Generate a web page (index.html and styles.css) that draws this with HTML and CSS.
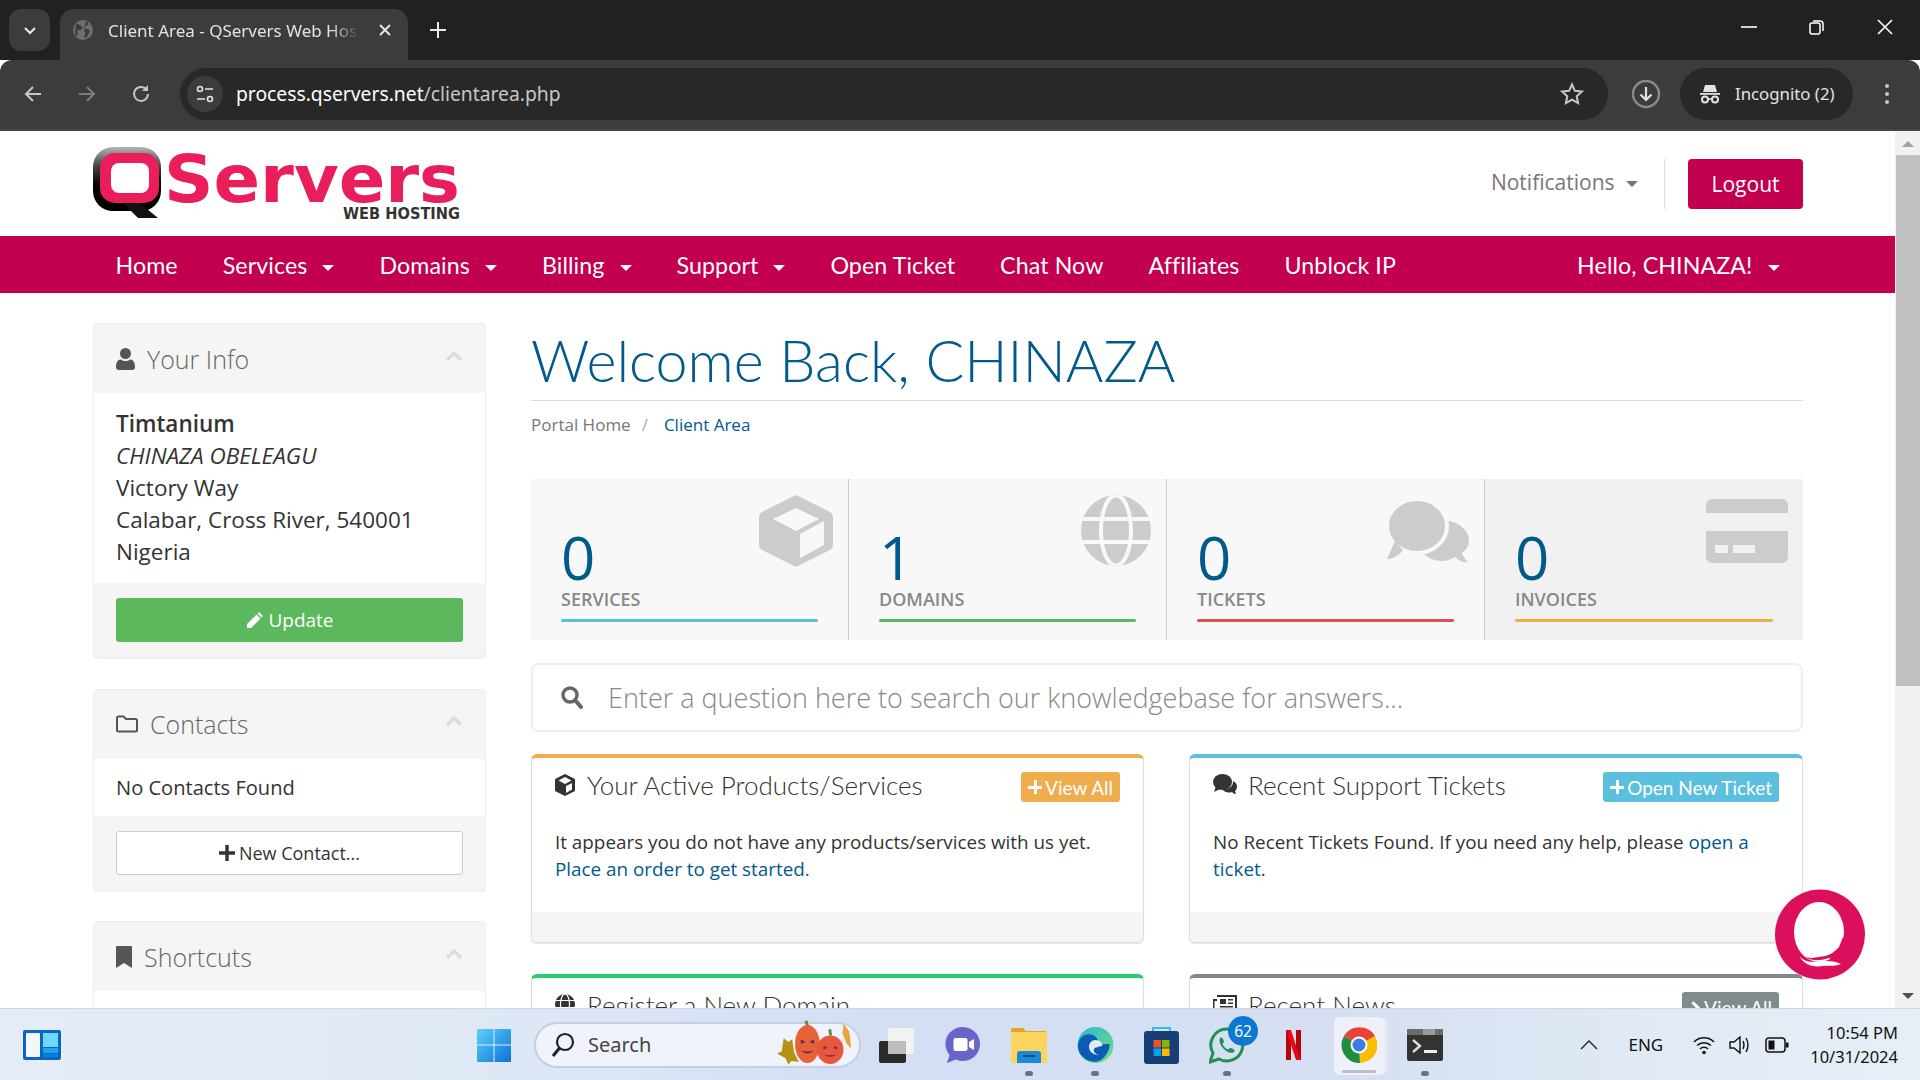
FILE: index.html
```html
<!DOCTYPE html>
<html lang="en">
<head>
  <meta charset="UTF-8">
  <title>Client Area - QServers Web Hosting</title>
  <link rel="stylesheet" href="styles.css">
</head>
<body>
  <!-- browser chrome -->
  <div class="tabstrip">
    <div class="tab-search">
      <svg width="14" height="14" viewBox="0 0 14 14"><path d="M2 5l5 5 5-5" fill="none" stroke="#e8eaed" stroke-width="2"/></svg>
    </div>
    <div class="tab">
      <svg class="tab-fav" width="20" height="20" viewBox="0 0 20 20"><circle cx="10" cy="10" r="10" fill="#6b6e72"/><path d="M3 4c3 0 5 1 6 3s-1 3-3 3-2 2-1 5l-3 1zM13 1c2 1 3 3 2 4s-3 0-4 1 1 3 3 3 3 1 2 4-3 5-5 5c1-3 2-5 0-7" fill="#3c3c3c"/></svg>
      <span class="tab-title">Client Area - QServers Web Hos</span>
      <svg class="tab-close" width="14" height="14" viewBox="0 0 14 14"><path d="M2 2l10 10M12 2L2 12" stroke="#e8eaed" stroke-width="1.8"/></svg>
    </div>
    <svg class="new-tab" width="18" height="18" viewBox="0 0 18 18"><path d="M9 1v16M1 9h16" stroke="#e8eaed" stroke-width="2"/></svg>
    <div class="win-controls">
      <svg width="16" height="16" viewBox="0 0 16 16"><path d="M0 8h16" stroke="#fff" stroke-width="1.6"/></svg>
      <svg width="16" height="16" viewBox="0 0 16 16"><rect x="1" y="4" width="10" height="11" rx="2" fill="none" stroke="#fff" stroke-width="1.5"/><path d="M4 2h7a3 3 0 0 1 3 3v7" fill="none" stroke="#fff" stroke-width="1.5"/></svg>
      <svg width="16" height="16" viewBox="0 0 16 16"><path d="M1 1l14 14M15 1L1 15" stroke="#fff" stroke-width="1.6"/></svg>
    </div>
  </div>
  <div class="toolbar">
    <svg class="tool" width="20" height="20" viewBox="0 0 20 20"><path d="M18 10H3M10 3l-7 7 7 7" fill="none" stroke="#c7c7c7" stroke-width="2"/></svg>
    <svg class="tool" width="20" height="20" viewBox="0 0 20 20"><path d="M2 10h15M10 3l7 7-7 7" fill="none" stroke="#7d7d7d" stroke-width="2"/></svg>
    <svg class="tool" width="20" height="20" viewBox="0 0 20 20"><path d="M17 10a7 7 0 1 1-2-5" fill="none" stroke="#c7c7c7" stroke-width="2"/><path d="M17 1v6h-6z" fill="#c7c7c7"/></svg>
    <div class="omnibox">
      <span class="site-info">
        <svg width="20" height="20" viewBox="0 0 20 20"><g fill="none" stroke="#e3e3e3" stroke-width="1.6"><circle cx="5" cy="5" r="2.5"/><path d="M10 5h8M2 15h8"/><circle cx="15" cy="15" r="2.5"/></g></svg>
      </span>
      <span class="url"><b>process.qservers.net</b>/clientarea.php</span>
      <svg class="star" width="24" height="24" viewBox="0 0 24 24"><path d="M12 2.5l2.9 6.3 6.9.8-5.1 4.7 1.4 6.8-6.100-3.400-6.100 3.400 1.400-6.800-5.100-4.700 6.900-.8z" fill="none" stroke="#c7c7c7" stroke-width="2"/></svg>
    </div>
    <svg class="dl" width="30" height="30" viewBox="0 0 30 30"><circle cx="15" cy="15" r="13" fill="none" stroke="#8a8a8a" stroke-width="2.400"/><path d="M15 8v13M9.500 15.500l5.500 5.500 5.500-5.500" fill="none" stroke="#e3e3e3" stroke-width="2.200"/></svg>
    <div class="incognito">
      <svg width="22" height="22" viewBox="0 0 22 22"><path d="M6 2h10l2 7H4zM1 10h20v1.800H1z" fill="#e3e3e3"/><circle cx="6" cy="16.500" r="3" fill="none" stroke="#e3e3e3" stroke-width="2"/><circle cx="16" cy="16.500" r="3" fill="none" stroke="#e3e3e3" stroke-width="2"/><path d="M9 16h4" stroke="#e3e3e3" stroke-width="1.500"/></svg>
      <span>Incognito (2)</span>
    </div>
    <div class="kebab"><i></i><i></i><i></i></div>
  </div>

  <!-- page -->
  <div class="viewport">
    <div class="page">
      <header class="site-head">
        <svg class="logo" width="372" height="90" viewBox="0 -10 372 90" role="img" aria-label="QServers Web Hosting">
          <defs>
            <linearGradient id="qring" x1="0" y1="0" x2="0" y2="1"><stop offset="0" stop-color="#b5b5b5"/><stop offset=".3" stop-color="#444"/><stop offset=".6" stop-color="#000"/><stop offset="1" stop-color="#000"/></linearGradient>
          </defs>
          <rect x="0" y="1" width="68" height="64" rx="20" fill="url(#qring)"/>
          <path d="M31 58h17l17 14H45z" fill="#111"/>
          <rect x="7" y="7" width="59" height="50" rx="15" fill="#e91e5b"/>
          <rect x="18" y="17" width="38" height="30" rx="8" fill="#fff"/>
          <text class="logo-word" x="71" y="56" textLength="296" lengthAdjust="spacingAndGlyphs">Servers</text>
          <text class="logo-sub" x="250" y="73" textLength="117" lengthAdjust="spacingAndGlyphs">WEB HOSTING</text>
        </svg>
        <div class="head-actions">
          <a class="notif">Notifications <i class="caret caret-grey"></i></a>
          <span class="head-sep"></span>
          <a class="btn-logout">Logout</a>
        </div>
      </header>

      <nav class="main-nav">
        <a>Home</a>
        <a>Services <i class="caret"></i></a>
        <a>Domains <i class="caret"></i></a>
        <a>Billing <i class="caret"></i></a>
        <a>Support <i class="caret"></i></a>
        <a>Open Ticket</a>
        <a>Chat Now</a>
        <a>Affiliates</a>
        <a>Unblock IP</a>
        <a class="nav-right">Hello, CHINAZA! <i class="caret"></i></a>
      </nav>

      <div class="content">
        <aside class="sidebar">
          <section class="side-panel">
            <div class="side-head">
              <svg class="side-ico" width="19" height="22" viewBox="0 0 19 22"><circle cx="9.500" cy="5.500" r="5.500" fill="#555"/><path d="M0 19c0-5 2-7.500 5-7.500 1.300 1 3 1.500 4.500 1.500s3.200-.5 4.500-1.500c3 0 5 2.500 5 7.500 0 2-1 3-3 3H3c-2 0-3-1-3-3z" fill="#555"/></svg>
              <h3>Your Info</h3>
              <svg class="side-chev" width="18" height="12" viewBox="0 0 18 12"><path d="M2 10l7-7 7 7" fill="none" stroke="#ddd" stroke-width="3.500"/></svg>
            </div>
            <div class="side-body">
              <strong>Timtanium</strong><br>
              <em>CHINAZA OBELEAGU</em><br>
              Victory Way<br>
              Calabar, Cross River, 540001<br>
              Nigeria
            </div>
            <div class="side-foot">
              <a class="btn-block btn-green">
                <svg width="19" height="19" viewBox="0 0 19 19"><path d="M14 1l4 4-1.500 1.500-4-4zM11.500 3.500l4 4L6 17H2v-4z" fill="#fff"/></svg>
                Update
              </a>
            </div>
          </section>

          <section class="side-panel">
            <div class="side-head">
              <svg class="side-ico" width="22" height="18" viewBox="0 0 22 18"><path d="M1 15V3a1.500 1.500 0 0 1 1.500-1.500h5L10 4h9.500A1.500 1.500 0 0 1 21 5.500V15a1.500 1.500 0 0 1-1.500 1.500h-17A1.500 1.500 0 0 1 1 15z" fill="none" stroke="#555" stroke-width="2"/></svg>
              <h3>Contacts</h3>
              <svg class="side-chev" width="18" height="12" viewBox="0 0 18 12"><path d="M2 10l7-7 7 7" fill="none" stroke="#ddd" stroke-width="3.500"/></svg>
            </div>
            <div class="side-body side-body-short">No Contacts Found</div>
            <div class="side-foot">
              <a class="btn-block btn-white">
                <svg width="16" height="16" viewBox="0 0 16 16"><path d="M8 0v16M0 8h16" stroke="#333" stroke-width="3.400"/></svg>
                New Contact...
              </a>
            </div>
          </section>

          <section class="side-panel">
            <div class="side-head">
              <svg class="side-ico" width="16" height="22" viewBox="0 0 16 22"><path d="M0 1a1 1 0 0 1 1-1h14a1 1 0 0 1 1 1v21l-8-5-8 5z" fill="#555"/></svg>
              <h3>Shortcuts</h3>
              <svg class="side-chev" width="18" height="12" viewBox="0 0 18 12"><path d="M2 10l7-7 7 7" fill="none" stroke="#ddd" stroke-width="3.500"/></svg>
            </div>
            <div class="side-body"></div>
          </section>
        </aside>

        <main class="main-col">
          <h1 class="welcome">Welcome Back, CHINAZA</h1>
          <div class="crumbs"><a>Portal Home</a><span class="crumb-sep">/</span><a class="crumb-on">Client Area</a></div>

          <div class="stats">
            <div class="stat">
              <svg class="stat-ico" width="74" height="72" viewBox="0 0 74 72"><path d="M37 0l34 17q3 2 3 5v28q0 3-3 5L37 72 3 55q-3-2-3-5V22q0-3 3-5z" fill="#ccc"/><path d="M37 13l23 11-23 12-23-12z" fill="#f8f8f8"/><path d="M41 39l24-13v24L41 63z" fill="#f8f8f8"/></svg>
              <div class="stat-num">0</div>
              <div class="stat-label">Services</div>
              <div class="stat-line line-info"></div>
            </div>
            <div class="stat">
              <svg class="stat-ico" width="70" height="71" viewBox="0 0 70 71"><defs><clipPath id="glb"><ellipse cx="35" cy="35.500" rx="35" ry="35.500"/></clipPath></defs><g clip-path="url(#glb)"><rect width="70" height="71" fill="#ccc"/><g fill="none" stroke="#f8f8f8" stroke-width="4"><ellipse cx="35" cy="35.500" rx="15" ry="35"/><path d="M0 24h70M0 47h70"/></g></g></svg>
              <div class="stat-num">1</div>
              <div class="stat-label">Domains</div>
              <div class="stat-line line-ok"></div>
            </div>
            <div class="stat">
              <svg class="stat-ico ico-c" width="82" height="64" viewBox="0 0 82 64"><path d="M62 22c11 2 20 10 20 19 0 6-3 10-7 13 1 4 4 7 6 9-4 1-9-1-13-5-4 2-8 4-13 4-9 0-17-4-21-11" fill="#ccc"/><ellipse cx="30" cy="27" rx="30" ry="27" fill="#ccc" stroke="#f8f8f8" stroke-width="4"/><path d="M8 42l-8 18c5 0 12-3 16-9z" fill="#ccc"/></svg>
              <div class="stat-num">0</div>
              <div class="stat-label">Tickets</div>
              <div class="stat-line line-bad"></div>
            </div>
            <div class="stat stat-last">
              <svg class="stat-ico ico-c" width="82" height="64" viewBox="0 0 82 64"><path d="M0 14V6a6 6 0 0 1 6-6h70a6 6 0 0 1 6 6v8zM0 32h82v26a6 6 0 0 1-6 6H6a6 6 0 0 1-6-6z" fill="#ccc"/><path d="M9 46h13v8H9zM27 46h22v8H27z" fill="#f1f1f1"/></svg>
              <div class="stat-num">0</div>
              <div class="stat-label">Invoices</div>
              <div class="stat-line line-warn"></div>
            </div>
          </div>

          <div class="kb-search">
            <svg width="22" height="23" viewBox="0 0 22 23"><circle cx="9" cy="9" r="7" fill="none" stroke="#666" stroke-width="3.400"/><path d="M14 14l6 7" stroke="#666" stroke-width="4" stroke-linecap="round"/></svg>
            <span>Enter a question here to search our knowledgebase for answers...</span>
          </div>

          <div class="home-panels">
            <section class="home-panel top-warn">
              <div class="hp-head">
                <svg class="hp-ico" width="20" height="22" viewBox="0 0 20 22"><path d="M10 0l9 4.500q1 .5 1 1.500v10q0 1-1 1.500L10 22 1 17.500Q0 17 0 16V6q0-1 1-1.500z" fill="#333"/><path d="M10 3l6.500 3.500L10 10 3.500 6.500zM11 12l6-3v6.500l-6 3.500z" fill="#fff"/></svg>
                <h3>Your Active Products/Services</h3>
                <a class="btn-small bg-warn"><i class="plus"></i>View All</a>
              </div>
              <div class="hp-body">It appears you do not have any products/services with us yet. <a>Place an order to get started.</a></div>
              <div class="hp-foot"></div>
            </section>
            <section class="home-panel top-info">
              <div class="hp-head">
                <svg class="hp-ico ico-wide" width="24" height="20" viewBox="0 0 24 20"><ellipse cx="9.500" cy="8" rx="9.500" ry="8" fill="#333"/><path d="M3 12l-2 6 6-3z" fill="#333"/><path d="M20 7c2.500 1 4 3 4 5.500 0 2-1 3.500-2 4.500l1 3c-2 0-3-1-4-2-1 .5-2 .5-3 .5-3 0-5-1-6.500-3 6 0 11-3 10.500-8.500z" fill="#333"/></svg>
                <h3>Recent Support Tickets</h3>
                <a class="btn-small bg-info"><i class="plus"></i>Open New Ticket</a>
              </div>
              <div class="hp-body">No Recent Tickets Found. If you need any help, please <a>open a ticket</a>.</div>
              <div class="hp-foot"></div>
            </section>
            <section class="home-panel top-green">
              <div class="hp-head">
                <svg class="hp-ico" width="20" height="20" viewBox="0 0 20 20"><circle cx="10" cy="10" r="10" fill="#333"/><g fill="none" stroke="#fff" stroke-width="1.200"><ellipse cx="10" cy="10" rx="4.500" ry="10"/><path d="M0 6.500h20M0 13.500h20"/></g></svg>
                <h3>Register a New Domain</h3>
              </div>
            </section>
            <section class="home-panel top-grey">
              <div class="hp-head">
                <svg class="hp-ico ico-wide" width="24" height="20" viewBox="0 0 24 20"><path d="M4 2h19v16H2a1.500 1.500 0 0 1-1.500-1.500V6H4" fill="none" stroke="#333" stroke-width="2"/><path d="M7 5h6v5H7zM15 5h5v1.500h-5zM15 8.500h5V10h-5zM7 12h13v1.500H7z" fill="#333"/></svg>
                <h3>Recent News</h3>
                <a class="btn-small bg-grey"><i class="chev-r"></i>View All</a>
              </div>
            </section>
          </div>
        </main>
      </div>
    </div>
    <div class="scrollbar">
      <i class="sb-up"></i>
      <div class="sb-track"><div class="sb-thumb"></div></div>
      <i class="sb-down"></i>
    </div>

    <svg class="chat-bubble" width="90" height="91" viewBox="0 0 90 91">
      <circle cx="45" cy="45.500" r="45" fill="#dc0f5c"/>
      <ellipse cx="44" cy="43" rx="25" ry="30" fill="#fff"/>
      <path d="M22 62c8 9 16 7 22 6 7-1 13-2 20-10l4-10 6 3-4 22c-8-1-12-3-16-4-8 2-18 6-32-7z" fill="#dc0f5c"/>
      <path d="M24 67c10 10 20 4 28 5 5 0 10 1 14 3-8 3-12 1-18 2-8 1-17 1-24-10z" fill="#fff"/>
    </svg>
  </div>

  <!-- windows taskbar -->
  <footer class="taskbar">
    <svg class="tb-widget" width="38" height="30" viewBox="0 0 38 30"><rect width="38" height="30" rx="2" fill="#0a66c2"/><rect x="3" y="3" width="14" height="24" rx="1" fill="#f4f6f8"/><rect x="20" y="3" width="15" height="14" fill="#6fd8ff"/><rect x="20" y="18" width="15" height="5" fill="#19a6f5"/><rect x="20" y="24" width="15" height="3" fill="#0d7fd6"/></svg>
    <div class="tb-center">
      <svg class="tb-win" width="34" height="34" viewBox="0 0 34 34"><defs><linearGradient id="wing" x1="0" y1="0" x2="1" y2="1"><stop offset="0" stop-color="#5ed0fa"/><stop offset="1" stop-color="#0a74d6"/></linearGradient></defs><path d="M1 1h15.500v15.500H0V2zM17.500 1H33a1 1 0 0 1 1 1v14.500H17.500zM0 17.500h16.500V34H1a1 1 0 0 1-1-1zM17.500 17.500H34V33a1 1 0 0 1-1 1H17.500z" fill="url(#wing)"/></svg>
      <div class="tb-search">
        <svg width="24" height="26" viewBox="0 0 24 26"><circle cx="14" cy="10" r="8" fill="none" stroke="#222" stroke-width="2.200"/><path d="M8.500 16L2 24" stroke="#222" stroke-width="3"/></svg>
        <span>Search</span>
        <svg class="pumpkins" width="76" height="46" viewBox="0 0 80 46"><path d="M0 34l5-2 2-14 5 4 4-3 2 14 5 10-8-1-3 4-3-7z" fill="#b99016"/><path d="M70 3l6 8 1 8 1 10-5-6-4-10z" fill="#e8a33a"/><path d="M31 6l-2-6 3-1 2 7z" fill="#5d8f3a"/><ellipse cx="32" cy="24" rx="13" ry="20" fill="#e6633a"/><path d="M25 19l5 3-5 2zM39 19l-5 3 5 2zM25 31q7 6 14 0-7 2-14 0z" fill="#6c2a5c"/><path d="M55 15l-1-6 3-1 1 7z" fill="#5d8f3a"/><ellipse cx="56" cy="30" rx="14" ry="15" fill="#e8573a"/><path d="M49 26l4 2-4 2zM63 26l-4 2 4 2zM49 35q7 5 14 0-7 2-14 0z" fill="#6c2a5c"/></svg>
      </div>
      <div class="tb-apps">
        <div class="tb-app">
          <svg width="36" height="36" viewBox="0 0 36 36"><rect x="0" y="14" width="27" height="22" rx="2" fill="#2b2b2b"/><rect x="9" y="1" width="26" height="26" rx="2" fill="#f2f2f2"/><rect x="9" y="14" width="18" height="13" fill="#bcbcbc"/></svg>
        </div>
        <div class="tb-app">
          <svg width="36" height="38" viewBox="0 0 36 38"><path d="M18 1a17 17 0 1 1-7 32.500L2 37l2.500-8A17 17 0 0 1 18 1z" fill="#6a64c8"/><rect x="8.500" y="12" width="14" height="13" rx="2" fill="#fff"/><path d="M24 16l5-3v11l-5-3z" fill="#fff"/></svg>
        </div>
        <div class="tb-app has-dot">
          <svg width="36" height="36" viewBox="0 0 36 36"><path d="M0 3a2 2 0 0 1 2-2h10l3 3h19a2 2 0 0 1 2 2v4H0z" fill="#e3a51e"/><rect y="5" width="36" height="31" fill="#fdd45e"/><path d="M6 36v-9a3 3 0 0 1 3-3h18a3 3 0 0 1 3 3v9z" fill="#1a8ad8"/><rect x="12" y="28" width="12" height="2" fill="#0b4e8a"/></svg>
        </div>
        <div class="tb-app has-dot">
          <svg width="37" height="38" viewBox="0 0 37 38"><defs><linearGradient id="edg" x1="0" y1="0" x2="1" y2="1"><stop offset="0" stop-color="#2cb5d8"/><stop offset="1" stop-color="#72e07a"/></linearGradient></defs><circle cx="18.500" cy="19" r="18" fill="url(#edg)"/><path d="M1 20c0-9 8-14 15-11 4 2 6 6 4 9 5 1 9 0 12 0 2 0-1 12-8 16-9 5-23-2-23-14z" fill="#0d5bb5"/><path d="M18 14c5 0 8 3 7 6-3 1-7 1-8 3s1 5 5 6c-5 0-10-3-10-8 0-4 3-7 6-7z" fill="#e4ebf6"/></svg>
        </div>
        <div class="tb-app">
          <svg width="35" height="38" viewBox="0 0 35 38"><path d="M9 6V2h17v4" fill="none" stroke="#2fc0ee" stroke-width="2"/><rect y="5" width="35" height="33" rx="3" fill="#173f75"/><rect x="9.500" y="14" width="7.500" height="7.500" fill="#f25022"/><rect x="18" y="14" width="7.500" height="7.500" fill="#7fba00"/><rect x="9.500" y="22.500" width="7.500" height="7.500" fill="#00a4ef"/><rect x="18" y="22.500" width="7.500" height="7.500" fill="#ffb900"/></svg>
        </div>
        <div class="tb-app has-dot app-wa">
          <svg width="36" height="40" viewBox="0 0 36 40"><path d="M18 4a16 16 0 1 1-8 30L1 37l3-9A16 16 0 0 1 18 4z" fill="none" stroke="#1f8f55" stroke-width="3"/><path d="M11 13c2-2 4 2 4 4l-1.500 2c1 2.500 3 4.500 5.500 5.500l2-1.500c2 0 6 2 4 4-5 4-17-7-14-14z" fill="#1f8f55"/></svg>
          <b class="badge">62</b>
        </div>
        <div class="tb-app">
          <svg width="15" height="30" viewBox="0 0 15 30"><path d="M0 0h5v30l-5 1zM10 0h5v31l-5-1z" fill="#b1060f"/><path d="M0 0h5l10 31-5-1z" fill="#e50914"/></svg>
        </div>
        <div class="tb-app app-active">
          <svg width="36" height="36" viewBox="0 0 36 36"><path d="M18 18L3 9a18 18 0 0 1 31 0z" fill="#e94335"/><path d="M18 18L34 9a18 18 0 0 1-15 27z" fill="#fbbc04"/><path d="M18 18l1 18A18 18 0 0 1 3 9z" fill="#1e8e3e"/><circle cx="18" cy="18" r="8.500" fill="#fff"/><circle cx="18" cy="18" r="6.500" fill="#3b7de8"/></svg>
          <span class="active-bar"></span>
        </div>
        <div class="tb-app has-dot">
          <svg width="36" height="32" viewBox="0 0 36 32"><rect width="36" height="32" rx="2" fill="#333"/><rect x="0" y="0" width="16" height="6" fill="#6c6c6c"/><rect x="16" y="0" width="12" height="6" fill="#9a9a9a"/><rect x="28" y="0" width="8" height="6" fill="#6c6c6c"/><path d="M6 11l7 6-7 6" fill="none" stroke="#ddd" stroke-width="2.400"/><rect x="17" y="21" width="13" height="3" fill="#eee"/></svg>
        </div>
      </div>
    </div>
    <div class="tray">
      <svg class="tray-up" width="18" height="10" viewBox="0 0 18 10"><path d="M1 9l8-8 8 8" fill="none" stroke="#222" stroke-width="1.400"/></svg>
      <span class="tray-lang">ENG</span>
      <svg width="22" height="22" viewBox="0 0 22 22"><g fill="none" stroke="#111" stroke-width="1.500"><path d="M1 8a14 14 0 0 1 20 0M4 11.500a10 10 0 0 1 14 0M7 15a5.500 5.500 0 0 1 8 0"/></g><circle cx="11" cy="18.500" r="1.800" fill="#111"/></svg>
      <svg width="24" height="24" viewBox="0 0 24 24"><path d="M2 9h4l6-5v16l-6-5H2z" fill="none" stroke="#111" stroke-width="1.400"/><path d="M15 8q2 4 0 8M18 5q4 7 0 14" fill="none" stroke="#111" stroke-width="1.400"/></svg>
      <svg width="24" height="18" viewBox="0 0 24 18"><rect x="1" y="2" width="19" height="14" rx="3" fill="none" stroke="#111" stroke-width="1.500"/><rect x="3.500" y="4.500" width="6" height="9" fill="#111"/><rect x="21" y="6.500" width="2.500" height="5" fill="#111"/></svg>
      <div class="tray-clock"><span>10:54 PM</span><span>10/31/2024</span></div>
    </div>
  </footer>
</body>
</html>
```

FILE: styles.css
```css
* {
  box-sizing: border-box;
}

html, body {
  margin: 0;
  padding: 0;
}

body {
  width: 1920px;
  height: 1080px;
  overflow: hidden;
  display: flex;
  flex-direction: column;
  font-family: "Open Sans", sans-serif;
  color: #333;
  background: #fff;
}

a {
  text-decoration: none;
}

/* browser chrome */
.tabstrip {
  height: 60px;
  flex: none;
  background: #202222;
  display: flex;
  align-items: flex-start;
  padding: 9px 0 0 9px;
  font-family: "Noto Sans", sans-serif;
}

.tab-search {
  width: 41px;
  height: 42px;
  border-radius: 12px;
  background: #3c3c3c;
  display: flex;
  align-items: center;
  justify-content: center;
}

.tab {
  width: 348px;
  height: 51px;
  margin-left: 10px;
  padding: 0 16px 9px 13px;
  border-radius: 14px 14px 0 0;
  background: #3c3c3c;
  display: flex;
  align-items: center;
  color: #e3e3e3;
  font-size: 17px;
}

.tab-title {
  margin-left: 15px;
  width: 252px;
  white-space: nowrap;
  overflow: hidden;
  -webkit-mask-image: linear-gradient(90deg, #000 88%, transparent);
  mask-image: linear-gradient(90deg, #000 88%, transparent);
}

.tab-close {
  margin-left: auto;
}

.new-tab {
  margin: 12px 0 0 21px;
}

.win-controls {
  margin: 10px 27px 0 auto;
  display: flex;
  gap: 52px;
}

.toolbar {
  height: 71px;
  flex: none;
  background: #3c3c3c;
  border-bottom: 2px solid #474747;
  border-radius: 12px 12px 0 0;
  display: flex;
  align-items: center;
  padding: 0 0 2px 23px;
  font-family: "Noto Sans", sans-serif;
}

.tool {
  margin-right: 34px;
}

.tool:nth-child(3) {
  margin-right: 29px;
}

.omnibox {
  width: 1428px;
  height: 52px;
  border-radius: 26px;
  background: #282828;
  display: flex;
  align-items: center;
  padding-left: 7px;
}

.site-info {
  width: 36px;
  height: 36px;
  border-radius: 50%;
  background: #3c3c3c;
  display: flex;
  align-items: center;
  justify-content: center;
}

.url {
  margin-left: 13px;
  font-size: 19.300px;
  color: #c7c7c7;
}

.url b {
  font-weight: 400;
  color: #fff;
}

.star {
  margin: 0 24px 0 auto;
}

.dl {
  margin-left: 23px;
}

.incognito {
  width: 173px;
  height: 52px;
  margin-left: 19px;
  border-radius: 26px;
  background: #282828;
  display: flex;
  align-items: center;
  gap: 14px;
  padding-left: 19px;
  font-size: 16.800px;
  color: #e3e3e3;
}

.kebab {
  margin-left: 32px;
  display: flex;
  flex-direction: column;
  gap: 4px;
}

.kebab i {
  width: 4px;
  height: 4px;
  border-radius: 50%;
  background: #c7c7c7;
}

/* page frame */
.viewport {
  flex: 1;
  min-height: 0;
  display: flex;
  position: relative;
  overflow: hidden;
}

.page {
  width: 1895px;
  flex: none;
  overflow: hidden;
}

.scrollbar {
  flex: 1;
  background: #f1f1f1;
  display: flex;
  flex-direction: column;
  align-items: center;
  padding: 0 0 0 1px;
}

.sb-up, .sb-down {
  flex: none;
  width: 0;
  height: 0;
  border-left: 6px solid transparent;
  border-right: 6px solid transparent;
}

.sb-up {
  margin: 10px 0 8px;
  border-bottom: 6px solid #a3a3a3;
}

.sb-down {
  margin: 8px 0 9px;
  border-top: 6px solid #505050;
}

.sb-track {
  flex: 1;
  width: 100%;
}

.sb-thumb {
  width: 100%;
  height: 531px;
  background: #c1c1c1;
}

.chat-bubble {
  position: absolute;
  left: 1775px;
  top: 758px;
}

/* site header */
.site-head {
  height: 105px;
  padding: 5px 92px 0 93px;
  display: flex;
  align-items: flex-start;
}

.head-actions {
  margin-left: auto;
  margin-top: 23px;
  display: flex;
  align-items: center;
}

.notif {
  font-size: 21px;
  color: #777;
  margin-top: -5px;
}

.head-sep {
  width: 1px;
  height: 50px;
  margin: 0 23px 0 26px;
  background: #ddd;
}

.btn-logout {
  width: 115px;
  height: 50px;
  padding-bottom: 1px;
  border-radius: 4px;
  background: #c2004f;
  color: #fff;
  font-size: 21px;
  display: flex;
  align-items: center;
  justify-content: center;
}

.logo-word {
  font-family: "DejaVu Sans", sans-serif;
  font-weight: 700;
  font-size: 66px;
  fill: #e91e5b;
}

.logo-sub {
  font-family: "DejaVu Sans", sans-serif;
  font-weight: 700;
  font-size: 15px;
  fill: #333;
}

.caret {
  display: inline-block;
  width: 0;
  height: 0;
  margin-left: 9px;
  vertical-align: middle;
  border-top: 6px solid #fff;
  border-left: 6px solid transparent;
  border-right: 6px solid transparent;
}

.caret-grey {
  border-top-color: #777;
  margin-left: 6px;
}

/* navigation */
.main-nav {
  height: 57px;
  padding: 0 93px;
  background: #c2004f;
  display: flex;
  align-items: center;
  font-family: Lato, sans-serif;
  font-size: 23.200px;
  letter-spacing: 0.1px;
  color: #fff;
}

.main-nav a {
  padding: 0 22.500px;
  white-space: nowrap;
}

.nav-right {
  margin-left: auto;
}

/* layout */
.content {
  padding: 30px 92px 0 93px;
  display: flex;
  gap: 45px;
  align-items: flex-start;
}

.sidebar {
  width: 393px;
  flex: none;
}

.main-col {
  flex: 1;
  min-width: 0;
}

/* sidebar panels */
.side-panel {
  margin-bottom: 30.500px;
  border: 1px solid #eee;
  border-radius: 4px;
  background: #f5f5f5;
  box-shadow: 0 1px 1px rgba(0, 0, 0, 0.05);
}

.side-head {
  height: 69px;
  padding: 0 22px;
  display: flex;
  align-items: center;
}

.side-ico {
  flex: none;
  margin-right: 12px;
}

.side-head h3 {
  margin: 0;
  font-size: 25px;
  font-weight: 300;
  color: #666;
}

.side-chev {
  margin: -6px 0 0 auto;
}

.side-body {
  background: #fff;
  padding: 15px 22px 15px;
  font-size: 22.500px;
  line-height: 32.100px;
  color: #333;
}

.side-body strong {
  font-weight: 600;
}

.side-body-short {
  height: 57px;
  padding-top: 13px;
  font-size: 20.100px;
}

.side-foot {
  padding: 15px 22px 15px;
}

.btn-block {
  height: 44px;
  border-radius: 3px;
  display: flex;
  align-items: center;
  justify-content: center;
  gap: 4px;
  font-size: 19px;
}

.btn-green {
  background: #5cb85c;
  color: #fff;
}

.btn-white {
  background: #fff;
  border: 1px solid #ccc;
  color: #333;
  font-size: 18px;
}

/* welcome + breadcrumb */
.welcome {
  height: 78px;
  margin: 0;
  border-bottom: 1px solid #ddd;
  font-family: Lato, sans-serif;
  font-size: 57.400px;
  font-weight: 300;
  line-height: 74px;
  color: #005a8c;
}

.crumbs {
  height: 78px;
  padding-top: 12px;
  font-size: 17px;
  color: #777;
}

.crumbs a {
  color: #777;
}

.crumbs .crumb-on {
  color: #005a8c;
}

.crumb-sep {
  margin: 0 16px 0 11px;
  color: #aaa;
}

/* stat strip */
.stats {
  height: 161px;
  display: grid;
  grid-template-columns: repeat(4, 1fr);
}

.stat {
  position: relative;
  padding: 45px 30px 0;
  background: #f8f8f8;
  border-right: 1px solid #ccc;
}

.stat-last {
  background: #f1f1f1;
  border-right: 0;
}

.stat-ico {
  position: absolute;
  right: 15px;
  top: 16px;
}

.ico-c {
  top: 20px;
}

.stat-num {
  height: 63px;
  font-size: 60px;
  font-weight: 400;
  line-height: 66px;
  color: #005a8c;
}

.stat-label {
  margin-top: -1px;
  font-size: 18px;
  font-weight: 600;
  line-height: 26px;
  text-transform: uppercase;
  color: #888;
}

.stat-line {
  height: 3px;
  margin-top: 7px;
  border-radius: 2px;
}

.line-info { background: #5bc0de; }
.line-ok { background: #5cb85c; }
.line-bad { background: #d9534f; }
.line-warn { background: #f0ad4e; }

/* knowledgebase search */
.kb-search {
  height: 69px;
  margin: 23px 0 22px;
  padding-left: 28px;
  border: 2px solid #eee;
  border-radius: 8px;
  display: flex;
  align-items: center;
  gap: 25px;
  font-size: 27px;
  font-weight: 300;
  color: #888;
}

/* home panels */
.home-panels {
  display: grid;
  grid-template-columns: 613px 614px;
  gap: 31px 45px;
}

.home-panel {
  min-height: 189px;
  display: flex;
  flex-direction: column;
  border: 1px solid #ddd;
  border-top-width: 4px;
  border-radius: 6px;
  box-shadow: 0 1px 1px rgba(0, 0, 0, 0.1);
  background: #fff;
}

.top-warn { border-top-color: #f0ad4e; }
.top-info { border-top-color: #5bc0de; }
.top-green { border-top-color: #2ecc71; }
.top-grey { border-top-color: #7f8c8d; }

.hp-head {
  padding: 11px 23px 0 23px;
  display: flex;
  align-items: flex-start;
}

.hp-ico {
  flex: none;
  margin: 5px 12px 0 0;
}

.ico-wide {
  margin-right: 11px;
}

.hp-head h3 {
  margin: 0;
  font-family: Lato, sans-serif;
  font-size: 26px;
  font-weight: 300;
  line-height: 32px;
  color: #333;
}

.btn-small {
  height: 30px;
  margin: 3px 0 0 auto;
  padding: 0 7px;
  border-radius: 3px;
  display: flex;
  align-items: center;
  font-family: Lato, sans-serif;
  font-size: 19px;
  font-weight: 400;
  color: #fff;
}

.bg-warn { background: #f0ad4e; }
.bg-info { background: #5bc0de; }
.bg-grey { background: #7f8c8d; }

.plus {
  position: relative;
  width: 14px;
  height: 14px;
  margin-right: 3px;
  flex: none;
  background:
    linear-gradient(#fff, #fff) center / 100% 3px no-repeat,
    linear-gradient(#fff, #fff) center / 3px 100% no-repeat;
}

.chev-r {
  width: 9px;
  height: 9px;
  margin-right: 6px;
  border-top: 3px solid #fff;
  border-right: 3px solid #fff;
  transform: rotate(45deg);
}

.hp-body {
  flex: 1;
  padding: 27px 23px 0;
  font-size: 18.850px;
  line-height: 27px;
  color: #333;
}

.hp-body a {
  color: #005a8c;
}

.hp-foot {
  height: 30px;
  background: #f5f5f5;
  border-radius: 0 0 5px 5px;
}

/* taskbar */
.taskbar {
  height: 72px;
  flex: none;
  position: relative;
  display: flex;
  align-items: center;
  border-top: 1px solid #cdd7e6;
  background: linear-gradient(90deg, #e4edf6 0%, #dfe8f5 25%, #d3dff5 45%, #d6dff1 70%, #e2ebf5 88%, #e6eef6 100%);
}

.tb-widget {
  margin-left: 23px;
  flex: none;
}

.tb-center {
  margin-left: 416px;
  display: flex;
  align-items: center;
}

.tb-win {
  flex: none;
}

.tb-search {
  width: 327px;
  height: 46px;
  margin-left: 23px;
  padding-left: 15px;
  position: relative;
  border-radius: 23px;
  border: 2px solid #c6cfe2;
  background: #f0f3fb;
  display: flex;
  align-items: center;
  gap: 13px;
  font-family: "Noto Sans", sans-serif;
  font-size: 20px;
  color: #444;
}

.pumpkins {
  position: absolute;
  right: 6px;
  top: -4px;
}

.tb-apps {
  display: flex;
  align-items: center;
  margin-left: 3px;
}

.tb-app {
  width: 66px;
  height: 60px;
  position: relative;
  display: flex;
  align-items: center;
  justify-content: center;
}

.has-dot::after {
  content: "";
  position: absolute;
  left: 50%;
  bottom: -1px;
  width: 8px;
  height: 5px;
  margin-left: -4px;
  border-radius: 3px;
  background: #6d7280;
}

.badge {
  position: absolute;
  left: 34px;
  top: 1px;
  width: 30px;
  height: 30px;
  border-radius: 50%;
  background: #0b78d4;
  color: #fff;
  font-family: "Noto Sans", sans-serif;
  font-size: 15.500px;
  font-weight: 400;
  line-height: 30px;
  text-align: center;
}

.app-active::before {
  content: "";
  position: absolute;
  inset: 2px 7px 0 8px;
  border-radius: 6px;
  background: #eef1f9;
  box-shadow: 4px 0 0 -1px #e2e7f3;
}

.app-active svg {
  position: relative;
}

.active-bar {
  position: absolute;
  left: 16px;
  right: 16px;
  bottom: 2px;
  height: 3px;
  border-radius: 2px;
  background: #b9bec9;
}

.tray {
  margin-left: auto;
  padding-right: 22px;
  display: flex;
  align-items: center;
  gap: 13px;
  font-family: "Noto Sans", sans-serif;
  color: #111;
}

.tray-up {
  margin-right: 17px;
}

.tray-lang {
  margin-right: 17px;
  font-size: 17px;
}

.tray-clock {
  margin-left: 8px;
  display: flex;
  flex-direction: column;
  align-items: flex-end;
  font-size: 16.500px;
  line-height: 24px;
}
```
